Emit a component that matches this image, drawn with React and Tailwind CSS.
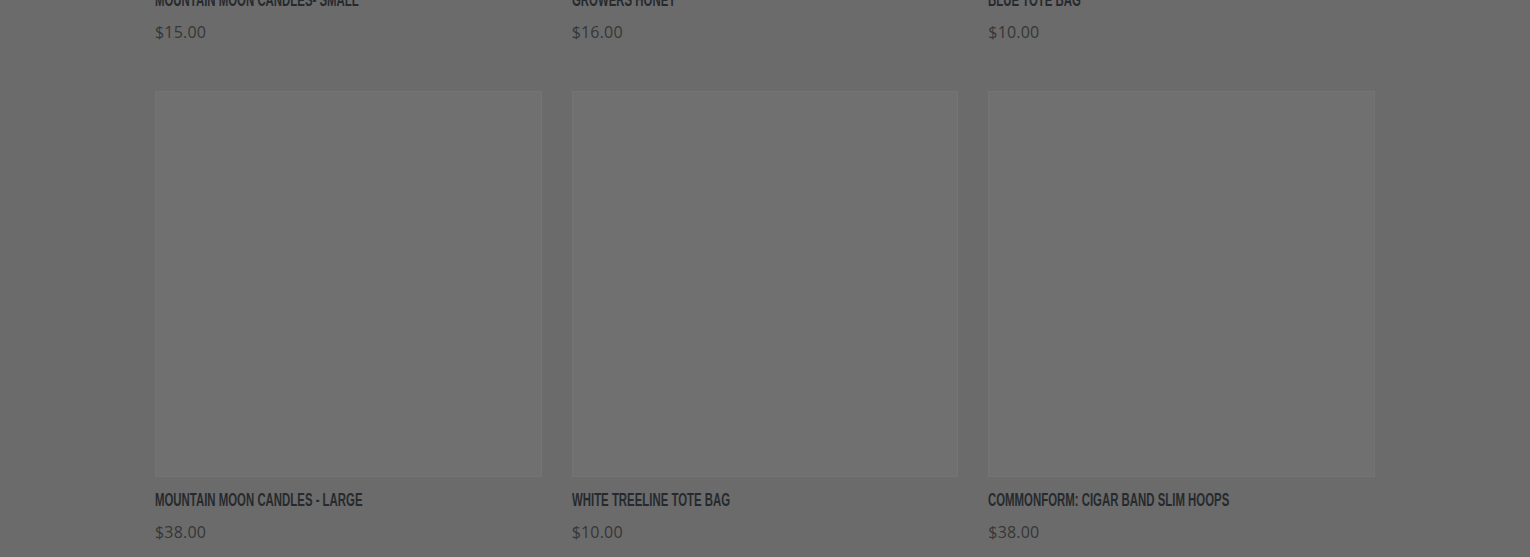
import React from "react";

const products = [
  { name: "Mountain Moon Candles- Small", price: "$15.00" },
  { name: "Growers Honey", price: "$16.00" },
  { name: "Blue Tote Bag", price: "$10.00" },
  { name: "Mountain Moon Candles - Large", price: "$38.00" },
  { name: "White Treeline Tote Bag", price: "$10.00" },
  { name: "Commonform: Cigar Band Slim Hoops", price: "$38.00" },
];

const ProductCard = ({ product }) => {
  return (
    <div className="flex flex-col">
      <div className="aspect-square w-full bg-[#707070] border border-[#747474]" />
      <div className="mt-[13px] h-[19px] overflow-visible">
        <p
          className="origin-left scale-x-[0.6] whitespace-nowrap text-[19px] leading-[19px] font-bold uppercase text-[#262a2e]"
          style={{ fontFamily: '"Liberation Sans", sans-serif' }}
        >
          {product.name}
        </p>
      </div>
      <p
        className="mt-[13px] text-[16px] leading-[20px] tracking-[0.2px] text-[#363636]"
        style={{ fontFamily: '"Open Sans", sans-serif' }}
      >
        {product.price}
      </p>
    </div>
  );
};

const App = () => {
  return (
    <div className="h-[557px] w-full overflow-hidden bg-[#6b6b6b]">
      <div className="mx-auto w-[1220px] -mt-[410px] grid grid-cols-3 gap-x-[30px] gap-y-[49px]">
        {products.map((product, i) => (
          <ProductCard key={i} product={product} />
        ))}
      </div>
    </div>
  );
};

export default App;
